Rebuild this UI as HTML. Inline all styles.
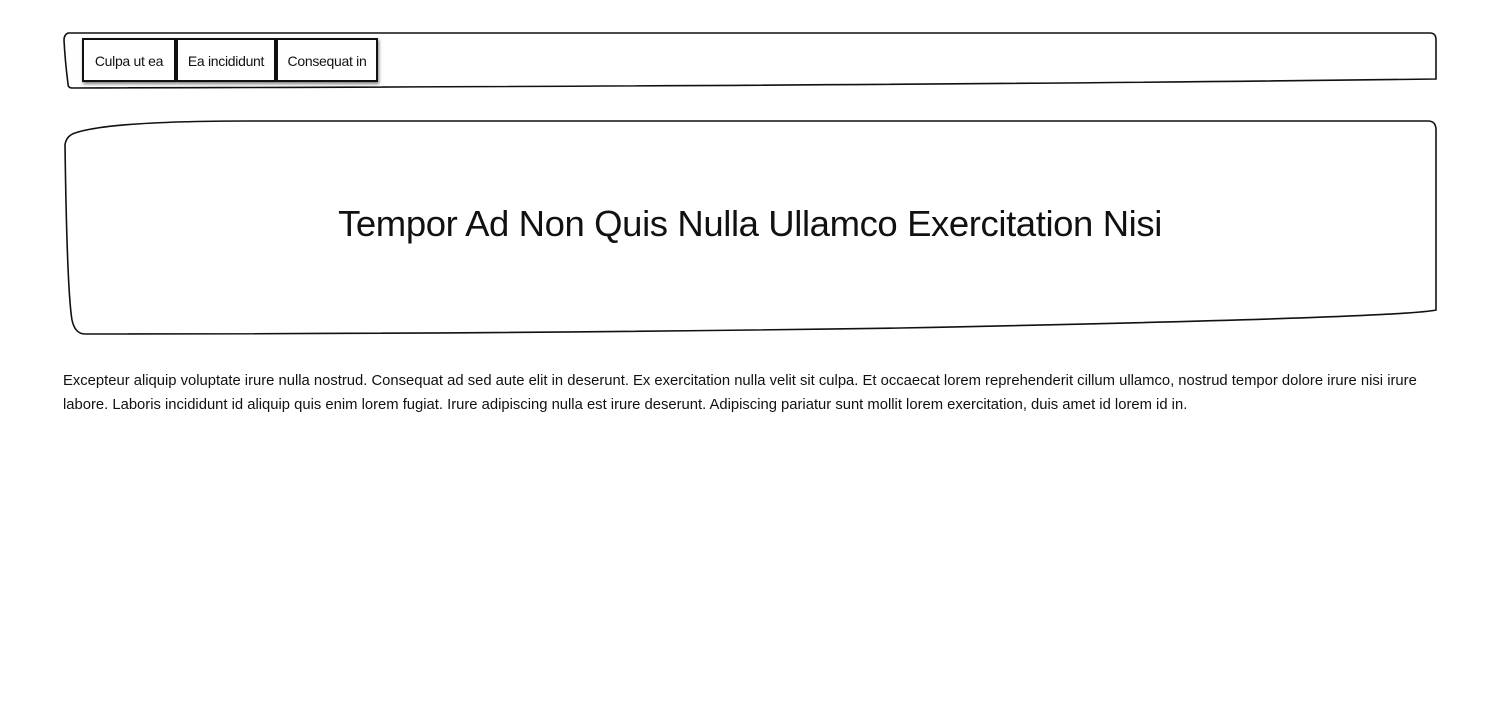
<!DOCTYPE html>
<html><head><meta charset="utf-8"><style>
html,body{margin:0;padding:0;background:#fff;width:1500px;height:720px;overflow:hidden;font-family:"Liberation Sans",sans-serif;color:#111}
svg{position:absolute;left:0;top:0}
.btn{position:absolute;top:38px;height:40px;border:2px solid #111;box-shadow:1px 2px 3px rgba(0,0,0,.5);background:#fff;font-size:14px;line-height:42px;text-align:center;box-sizing:content-box;white-space:nowrap;letter-spacing:-0.3px}
h1{position:absolute;left:0;width:1500px;top:203px;margin:0;text-align:center;font-weight:normal;font-size:36.5px;letter-spacing:-0.4px}
p{position:absolute;left:63px;top:369px;margin:0;font-size:14.8px;line-height:24px;white-space:nowrap}
</style></head><body>
<svg width="1500" height="720">
<path d="M68,33 L1430,33 Q1436,33 1436,40 L1436,79 Q900,86 72,88 Q68,88 68,84 Q65,60 64,40 Q64,35 68,33 Z" fill="none" stroke="#111" stroke-width="1.6"/>
<path d="M75,133 Q110,121 250,121 L1428,121 Q1436,121 1436,130 L1436,310 Q1400,318 900,328 Q500,334 85,334 Q75,334 72,320 Q67,290 65,145 Q66,136 75,133 Z" fill="none" stroke="#111" stroke-width="1.6"/>
</svg>
<div class="btn" style="left:82px;width:90px">Culpa ut ea</div>
<div class="btn" style="left:176px;width:96px">Ea incididunt</div>
<div class="btn" style="left:276px;width:98px">Consequat in</div>
<h1>Tempor Ad Non Quis Nulla Ullamco Exercitation Nisi</h1>
<p>Excepteur aliquip voluptate irure nulla nostrud. Consequat ad sed aute elit in deserunt. Ex exercitation nulla velit sit culpa. Et occaecat lorem reprehenderit cillum ullamco, nostrud tempor dolore irure nisi irure<br>labore. Laboris incididunt id aliquip quis enim lorem fugiat. Irure adipiscing nulla est irure deserunt. Adipiscing pariatur sunt mollit lorem exercitation, duis amet id lorem id in.</p>
</body></html>
